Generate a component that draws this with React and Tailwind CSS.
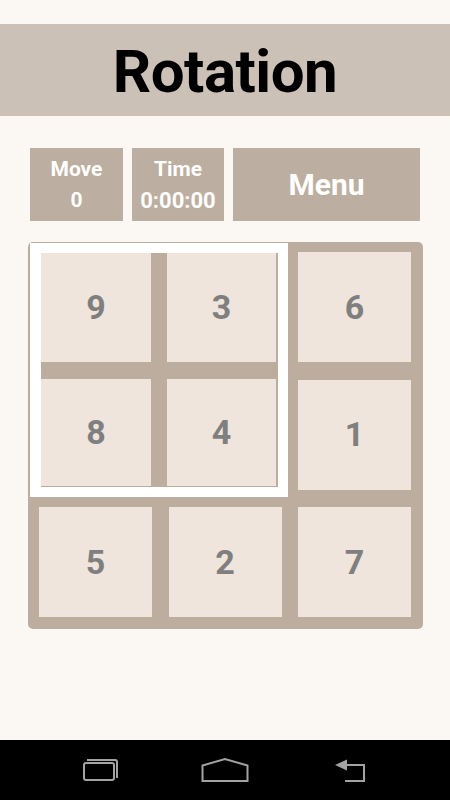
import React from "react";

const font = { fontFamily: "Roboto, 'Liberation Sans', Arial, sans-serif" };

function Tile({ n, cls }) {
  return (
    <div className={`bg-[#efe5dc] flex items-center justify-center text-[34px] font-bold text-[#7f7f7f] ${cls || ""}`}>
      {n}
    </div>
  );
}

export default function App() {
  return (
    <div className="w-[450px] h-[800px] bg-[#fbf8f3] flex flex-col overflow-hidden" style={font}>
      <div className="h-[24px]" />
      <div className="h-[92px] bg-[#ccc1b6] flex items-center justify-center">
        <span className="text-[60px] font-bold text-black leading-none tracking-[-0.5px] pt-[3px]">Rotation</span>
      </div>
      <div className="flex ml-[30px] mt-[32px] gap-[9px] h-[73px]">
        <div className="w-[93px] bg-[#bcaea0] flex flex-col items-center justify-center text-white font-bold text-[21px] leading-[31px]">
          <span>Move</span>
          <span>0</span>
        </div>
        <div className="w-[92px] bg-[#bcaea0] flex flex-col items-center justify-center text-white font-bold text-[21px] leading-[31px]">
          <span>Time</span>
          <span className="text-[22px]">0:00:00</span>
        </div>
        <div className="w-[187px] bg-[#bcaea0] flex items-center justify-center text-white font-bold text-[30px]">
          Menu
        </div>
      </div>
      <div className="ml-[28px] mt-[21px] w-[395px] h-[387px] bg-[#bcad9f] rounded-[5px] pl-[11px] pr-[12px] pt-[10px] pb-[12px]">
        <div className="grid grid-cols-[113px_113px_113px] grid-rows-[110px_110px_110px] gap-x-[16.5px] gap-y-[17.5px]">
          <div className="col-span-2 row-span-2 ml-[-9px] mr-[-6px] mt-[-9px] mb-[-7px] bg-white pl-[11px] pr-[10px] pt-[10px] pb-[10px]">
            <div className="w-full h-full bg-[#bcad9f] grid grid-cols-[110px_109px] grid-rows-[109px_107px] gap-x-[16px] gap-y-[17px]">
              <Tile n="9" />
              <Tile n="3" />
              <Tile n="8" />
              <Tile n="4" />
            </div>
          </div>
          <Tile n="6" />
          <Tile n="1" />
          <Tile n="5" />
          <Tile n="2" />
          <Tile n="7" />
        </div>
      </div>
      <div className="flex-1" />
      <div className="h-[60px] bg-black flex items-center">
        <svg width="450" height="60" viewBox="0 0 450 60">
          <g fill="none" stroke="#a3a3a3" strokeWidth="2">
            <path d="M87 20 L115 20 Q117 20 117 22 L117 38" />
            <rect x="84" y="23" width="30" height="17" rx="2" />
            <path d="M202.5 41 L202.5 25.5 L225 19 L247.5 25.5 L247.5 41 Z" />
            <path d="M344 25 L364 25 L364 41 L345 41" />
          </g>
          <path d="M335 25 L347 19.5 L347 30.5 Z" fill="#a3a3a3" />
        </svg>
      </div>
    </div>
  );
}
